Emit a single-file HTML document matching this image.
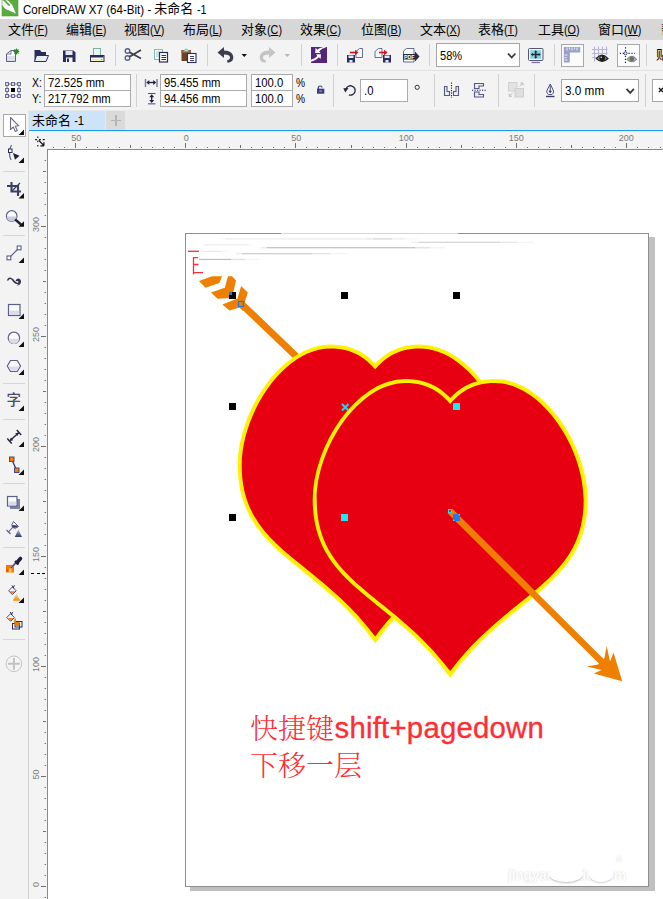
<!DOCTYPE html>
<html lang="zh"><head><meta charset="utf-8"><title>CorelDRAW X7</title>
<style>
html,body{margin:0;padding:0;}
body{width:663px;height:899px;overflow:hidden;position:relative;background:#f3f3f3;font-family:"Liberation Sans","Noto Sans CJK SC",sans-serif;font-size:12px;color:#000;}
.abs{position:absolute;}
.t{position:absolute;white-space:nowrap;line-height:1;}
.sep{position:absolute;width:1px;background:#d4d4d4;}
.inp{position:absolute;background:#fff;border:1px solid #ababab;box-sizing:border-box;}
.inp span{position:absolute;left:3px;top:1px;font-size:12px;line-height:13px;white-space:nowrap;}
u{text-decoration:underline;text-underline-offset:1px;}
svg{position:absolute;overflow:visible;}
.lat{display:inline-block;font-size:12px;transform:scaleX(.9);transform-origin:0 50%;}
.rl{position:absolute;font-size:9px;color:#7a7a7a;line-height:1;white-space:nowrap;}
</style></head><body>

<div class="abs" style="left:0;top:0;width:663px;height:19px;background:#fff;"></div>
<svg style="left:0;top:0" width="20" height="17" viewBox="0 0 20 17"><rect x="2" y="0" width="16" height="16" fill="#5aab42"/><path d="M2 0L7.600 0C9 1.500 10.500 3 11.600 4.300C13.500 7 14.500 10.500 15.900 13.600C12 12 9 10.500 6.600 9.600C4.500 8 3 6.500 2 5Z" fill="#fff"/><path d="M3.600 -.5L9 5.200" stroke="#5aab42" stroke-width="1.700" stroke-linecap="round"/><rect x="2" y="0" width="16" height="16" fill="none" stroke="#4ea236" stroke-width=".6"/></svg>
<div class="t" id="title" style="left:23px;top:2.500px;font-size:12px;"><span class="lat" style="transform:scaleX(.965);margin-right:-5px">CorelDRAW X7 (64-Bit) -&nbsp;</span><span style="font-size:13px;position:relative;top:-1px">未命名</span><span class="lat" style="transform:scaleX(.9);margin-left:1px">&nbsp;-1</span></div>
<div class="abs" style="left:0;top:19px;width:663px;height:21px;background:#d7d7d7;"></div>
<div class="t menu" id="m0" style="left:8px;top:23px;font-size:13px;">文件<span class="lat">(<u>F</u>)</span></div>
<div class="t menu" id="m1" style="left:66px;top:23px;font-size:13px;">编辑<span class="lat">(<u>E</u>)</span></div>
<div class="t menu" id="m2" style="left:124px;top:23px;font-size:13px;">视图<span class="lat">(<u>V</u>)</span></div>
<div class="t menu" id="m3" style="left:183px;top:23px;font-size:13px;">布局<span class="lat">(<u>L</u>)</span></div>
<div class="t menu" id="m4" style="left:241px;top:23px;font-size:13px;">对象<span class="lat">(<u>C</u>)</span></div>
<div class="t menu" id="m5" style="left:300px;top:23px;font-size:13px;">效果<span class="lat">(<u>C</u>)</span></div>
<div class="t menu" id="m6" style="left:361px;top:23px;font-size:13px;">位图<span class="lat">(<u>B</u>)</span></div>
<div class="t menu" id="m7" style="left:420px;top:23px;font-size:13px;">文本<span class="lat">(<u>X</u>)</span></div>
<div class="t menu" id="m8" style="left:478px;top:23px;font-size:13px;">表格<span class="lat">(<u>T</u>)</span></div>
<div class="t menu" id="m9" style="left:538px;top:23px;font-size:13px;">工具<span class="lat">(<u>O</u>)</span></div>
<div class="t menu" id="m10" style="left:598px;top:23px;font-size:13px;">窗口<span class="lat">(<u>W</u>)</span></div>
<div class="t menu" id="m11" style="left:661px;top:23px;font-size:13px;">帮<span class="lat">(<u>H</u>)</span></div>
<div class="abs" style="left:0;top:40px;width:663px;height:70px;background:#f3f3f3;"></div>
<div class="abs" style="left:0;top:70px;width:663px;height:1px;background:#e2e2e2;"></div>
<div class="abs" style="left:0;top:110px;width:663px;height:20px;background:#e9e9e9;"></div>
<div class="abs" style="left:29px;top:111px;width:76px;height:19px;background:#cde4f8;"></div>
<div class="t" id="tab" style="left:32px;top:114px;font-size:13px;">未命名<span class="lat" style="font-size:12.5px;transform:scaleX(.9);margin-left:0px">&nbsp;-1</span></div>
<div class="abs" style="left:106px;top:111px;width:19px;height:19px;background:#dadada;"></div>
<div class="abs" style="left:110.500px;top:119.500px;width:10.500px;height:1.600px;background:#b4b4b4;"></div><div class="abs" style="left:115px;top:115px;width:1.600px;height:10.500px;background:#b4b4b4;"></div>
<div class="abs" style="left:29px;top:129.500px;width:634px;height:1.500px;background:#1a9ff0;"></div>
<div class="abs" style="left:0;top:110px;width:28px;height:789px;background:#f3f3f3;"></div>
<div class="abs" style="left:28px;top:131px;width:1px;height:768px;background:#d2d2d2;"></div>
<div class="abs" style="left:29px;top:131px;width:634px;height:18px;background:#f4f4f4;"></div>
<div class="abs" style="left:29px;top:131px;width:18px;height:768px;background:#f4f4f4;"></div>
<div class="abs" style="left:47px;top:149px;width:616px;height:750px;background:#fff;border-left:1px solid #8a8a8a;border-top:1px solid #8a8a8a;box-sizing:border-box;"></div>
<svg style="left:0;top:0" width="663" height="899" fill="#707070" shape-rendering="crispEdges"><rect x="53.0" y="147" width="1" height="1"/><rect x="64.0" y="147" width="1" height="1"/><rect x="75.0" y="143" width="1" height="5"/><rect x="86.0" y="147" width="1" height="1"/><rect x="97.0" y="147" width="1" height="1"/><rect x="108.0" y="147" width="1" height="1"/><rect x="119.0" y="147" width="1" height="1"/><rect x="130.0" y="145" width="1" height="3"/><rect x="141.0" y="147" width="1" height="1"/><rect x="152.0" y="147" width="1" height="1"/><rect x="163.0" y="147" width="1" height="1"/><rect x="174.0" y="147" width="1" height="1"/><rect x="185.0" y="143" width="1" height="5"/><rect x="196.0" y="147" width="1" height="1"/><rect x="207.0" y="147" width="1" height="1"/><rect x="218.0" y="147" width="1" height="1"/><rect x="229.0" y="147" width="1" height="1"/><rect x="240.0" y="145" width="1" height="3"/><rect x="251.0" y="147" width="1" height="1"/><rect x="262.0" y="147" width="1" height="1"/><rect x="273.0" y="147" width="1" height="1"/><rect x="284.0" y="147" width="1" height="1"/><rect x="295.0" y="143" width="1" height="5"/><rect x="306.0" y="147" width="1" height="1"/><rect x="317.0" y="147" width="1" height="1"/><rect x="328.0" y="147" width="1" height="1"/><rect x="339.0" y="147" width="1" height="1"/><rect x="351.0" y="145" width="1" height="3"/><rect x="362.0" y="147" width="1" height="1"/><rect x="373.0" y="147" width="1" height="1"/><rect x="384.0" y="147" width="1" height="1"/><rect x="395.0" y="147" width="1" height="1"/><rect x="406.0" y="143" width="1" height="5"/><rect x="417.0" y="147" width="1" height="1"/><rect x="428.0" y="147" width="1" height="1"/><rect x="439.0" y="147" width="1" height="1"/><rect x="450.0" y="147" width="1" height="1"/><rect x="461.0" y="145" width="1" height="3"/><rect x="472.0" y="147" width="1" height="1"/><rect x="483.0" y="147" width="1" height="1"/><rect x="494.0" y="147" width="1" height="1"/><rect x="505.0" y="147" width="1" height="1"/><rect x="516.0" y="143" width="1" height="5"/><rect x="527.0" y="147" width="1" height="1"/><rect x="538.0" y="147" width="1" height="1"/><rect x="549.0" y="147" width="1" height="1"/><rect x="560.0" y="147" width="1" height="1"/><rect x="571.0" y="145" width="1" height="3"/><rect x="582.0" y="147" width="1" height="1"/><rect x="593.0" y="147" width="1" height="1"/><rect x="604.0" y="147" width="1" height="1"/><rect x="615.0" y="147" width="1" height="1"/><rect x="626.0" y="143" width="1" height="5"/><rect x="637.0" y="147" width="1" height="1"/><rect x="648.0" y="147" width="1" height="1"/><rect x="660.0" y="147" width="1" height="1"/>
<rect x="45" y="897.0" width="1" height="1"/><rect x="44" y="897.0" width="1" height="1" opacity=".4"/><rect x="41" y="886.0" width="5" height="1"/><rect x="45" y="875.0" width="1" height="1"/><rect x="44" y="875.0" width="1" height="1" opacity=".4"/><rect x="45" y="864.0" width="1" height="1"/><rect x="44" y="864.0" width="1" height="1" opacity=".4"/><rect x="45" y="853.0" width="1" height="1"/><rect x="44" y="853.0" width="1" height="1" opacity=".4"/><rect x="45" y="842.0" width="1" height="1"/><rect x="44" y="842.0" width="1" height="1" opacity=".4"/><rect x="43" y="831.0" width="3" height="1"/><rect x="45" y="820.0" width="1" height="1"/><rect x="44" y="820.0" width="1" height="1" opacity=".4"/><rect x="45" y="809.0" width="1" height="1"/><rect x="44" y="809.0" width="1" height="1" opacity=".4"/><rect x="45" y="798.0" width="1" height="1"/><rect x="44" y="798.0" width="1" height="1" opacity=".4"/><rect x="45" y="787.0" width="1" height="1"/><rect x="44" y="787.0" width="1" height="1" opacity=".4"/><rect x="41" y="776.0" width="5" height="1"/><rect x="45" y="765.0" width="1" height="1"/><rect x="44" y="765.0" width="1" height="1" opacity=".4"/><rect x="45" y="754.0" width="1" height="1"/><rect x="44" y="754.0" width="1" height="1" opacity=".4"/><rect x="45" y="743.0" width="1" height="1"/><rect x="44" y="743.0" width="1" height="1" opacity=".4"/><rect x="45" y="732.0" width="1" height="1"/><rect x="44" y="732.0" width="1" height="1" opacity=".4"/><rect x="43" y="721.0" width="3" height="1"/><rect x="45" y="710.0" width="1" height="1"/><rect x="44" y="710.0" width="1" height="1" opacity=".4"/><rect x="45" y="699.0" width="1" height="1"/><rect x="44" y="699.0" width="1" height="1" opacity=".4"/><rect x="45" y="688.0" width="1" height="1"/><rect x="44" y="688.0" width="1" height="1" opacity=".4"/><rect x="45" y="677.0" width="1" height="1"/><rect x="44" y="677.0" width="1" height="1" opacity=".4"/><rect x="41" y="666.0" width="5" height="1"/><rect x="45" y="655.0" width="1" height="1"/><rect x="44" y="655.0" width="1" height="1" opacity=".4"/><rect x="45" y="644.0" width="1" height="1"/><rect x="44" y="644.0" width="1" height="1" opacity=".4"/><rect x="45" y="633.0" width="1" height="1"/><rect x="44" y="633.0" width="1" height="1" opacity=".4"/><rect x="45" y="622.0" width="1" height="1"/><rect x="44" y="622.0" width="1" height="1" opacity=".4"/><rect x="43" y="611.0" width="3" height="1"/><rect x="45" y="600.0" width="1" height="1"/><rect x="44" y="600.0" width="1" height="1" opacity=".4"/><rect x="45" y="589.0" width="1" height="1"/><rect x="44" y="589.0" width="1" height="1" opacity=".4"/><rect x="45" y="578.0" width="1" height="1"/><rect x="44" y="578.0" width="1" height="1" opacity=".4"/><rect x="45" y="567.0" width="1" height="1"/><rect x="44" y="567.0" width="1" height="1" opacity=".4"/><rect x="41" y="556.0" width="5" height="1"/><rect x="45" y="545.0" width="1" height="1"/><rect x="44" y="545.0" width="1" height="1" opacity=".4"/><rect x="45" y="534.0" width="1" height="1"/><rect x="44" y="534.0" width="1" height="1" opacity=".4"/><rect x="45" y="523.0" width="1" height="1"/><rect x="44" y="523.0" width="1" height="1" opacity=".4"/><rect x="45" y="512.0" width="1" height="1"/><rect x="44" y="512.0" width="1" height="1" opacity=".4"/><rect x="43" y="501.0" width="3" height="1"/><rect x="45" y="490.0" width="1" height="1"/><rect x="44" y="490.0" width="1" height="1" opacity=".4"/><rect x="45" y="479.0" width="1" height="1"/><rect x="44" y="479.0" width="1" height="1" opacity=".4"/><rect x="45" y="468.0" width="1" height="1"/><rect x="44" y="468.0" width="1" height="1" opacity=".4"/><rect x="45" y="457.0" width="1" height="1"/><rect x="44" y="457.0" width="1" height="1" opacity=".4"/><rect x="41" y="446.0" width="5" height="1"/><rect x="45" y="435.0" width="1" height="1"/><rect x="44" y="435.0" width="1" height="1" opacity=".4"/><rect x="45" y="424.0" width="1" height="1"/><rect x="44" y="424.0" width="1" height="1" opacity=".4"/><rect x="45" y="413.0" width="1" height="1"/><rect x="44" y="413.0" width="1" height="1" opacity=".4"/><rect x="45" y="402.0" width="1" height="1"/><rect x="44" y="402.0" width="1" height="1" opacity=".4"/><rect x="43" y="391.0" width="3" height="1"/><rect x="45" y="380.0" width="1" height="1"/><rect x="44" y="380.0" width="1" height="1" opacity=".4"/><rect x="45" y="369.0" width="1" height="1"/><rect x="44" y="369.0" width="1" height="1" opacity=".4"/><rect x="45" y="358.0" width="1" height="1"/><rect x="44" y="358.0" width="1" height="1" opacity=".4"/><rect x="45" y="347.0" width="1" height="1"/><rect x="44" y="347.0" width="1" height="1" opacity=".4"/><rect x="41" y="336.0" width="5" height="1"/><rect x="45" y="325.0" width="1" height="1"/><rect x="44" y="325.0" width="1" height="1" opacity=".4"/><rect x="45" y="314.0" width="1" height="1"/><rect x="44" y="314.0" width="1" height="1" opacity=".4"/><rect x="45" y="303.0" width="1" height="1"/><rect x="44" y="303.0" width="1" height="1" opacity=".4"/><rect x="45" y="292.0" width="1" height="1"/><rect x="44" y="292.0" width="1" height="1" opacity=".4"/><rect x="43" y="281.0" width="3" height="1"/><rect x="45" y="270.0" width="1" height="1"/><rect x="44" y="270.0" width="1" height="1" opacity=".4"/><rect x="45" y="259.0" width="1" height="1"/><rect x="44" y="259.0" width="1" height="1" opacity=".4"/><rect x="45" y="248.0" width="1" height="1"/><rect x="44" y="248.0" width="1" height="1" opacity=".4"/><rect x="45" y="237.0" width="1" height="1"/><rect x="44" y="237.0" width="1" height="1" opacity=".4"/><rect x="41" y="226.0" width="5" height="1"/><rect x="45" y="215.0" width="1" height="1"/><rect x="44" y="215.0" width="1" height="1" opacity=".4"/><rect x="45" y="204.0" width="1" height="1"/><rect x="44" y="204.0" width="1" height="1" opacity=".4"/><rect x="45" y="193.0" width="1" height="1"/><rect x="44" y="193.0" width="1" height="1" opacity=".4"/><rect x="45" y="182.0" width="1" height="1"/><rect x="44" y="182.0" width="1" height="1" opacity=".4"/><rect x="43" y="171.0" width="3" height="1"/><rect x="45" y="160.0" width="1" height="1"/><rect x="44" y="160.0" width="1" height="1" opacity=".4"/></svg>
<div class="rl" style="left:56.2px;top:134px;width:40px;text-align:center;">50</div>
<div class="rl" style="left:166.2px;top:134px;width:40px;text-align:center;">0</div>
<div class="rl" style="left:276.2px;top:134px;width:40px;text-align:center;">50</div>
<div class="rl" style="left:386.2px;top:134px;width:40px;text-align:center;">100</div>
<div class="rl" style="left:496.2px;top:134px;width:40px;text-align:center;">150</div>
<div class="rl" style="left:606.2px;top:134px;width:40px;text-align:center;">200</div>
<div class="rl" style="left:16.4px;top:879.9px;width:40px;text-align:center;transform:rotate(-90deg);">0</div>
<div class="rl" style="left:16.4px;top:769.9px;width:40px;text-align:center;transform:rotate(-90deg);">50</div>
<div class="rl" style="left:16.4px;top:659.9px;width:40px;text-align:center;transform:rotate(-90deg);">100</div>
<div class="rl" style="left:16.4px;top:549.9px;width:40px;text-align:center;transform:rotate(-90deg);">150</div>
<div class="rl" style="left:16.4px;top:439.9px;width:40px;text-align:center;transform:rotate(-90deg);">200</div>
<div class="rl" style="left:16.4px;top:329.9px;width:40px;text-align:center;transform:rotate(-90deg);">250</div>
<div class="rl" style="left:16.4px;top:219.9px;width:40px;text-align:center;transform:rotate(-90deg);">300</div>
<svg style="left:0;top:0" width="60" height="160" viewBox="0 0 60 160" stroke="#111" fill="none" stroke-width="1.100"><path d="M35.200 139.600H45" stroke-dasharray="1.900 1.900"/><path d="M37.800 136.500V147" stroke-dasharray="1.600 2.600"/><path d="M38.800 140.300L43.800 145.500M43.900 145.800V142.300M43.900 145.800H40.400" stroke-width="1.200"/></svg>
<div class="abs" style="left:31px;top:573px;width:16px;height:1px;background:repeating-linear-gradient(90deg,#000 0 3px,transparent 3px 5.500px);"></div>
<svg style="left:0;top:0" width="663" height="899" viewBox="0 0 663 899">
<rect x="115" y="44" width="1" height="22" fill="#d2d2d2"/>
<rect x="207" y="44" width="1" height="22" fill="#d2d2d2"/>
<rect x="301" y="44" width="1" height="22" fill="#d2d2d2"/>
<rect x="337" y="44" width="1" height="22" fill="#d2d2d2"/>
<rect x="429" y="44" width="1" height="22" fill="#d2d2d2"/>
<rect x="554" y="44" width="1" height="22" fill="#d2d2d2"/>
<rect x="646" y="44" width="1" height="22" fill="#d2d2d2"/>
<rect x="136" y="74" width="1" height="33" fill="#d2d2d2"/>
<rect x="333" y="74" width="1" height="33" fill="#d2d2d2"/>
<rect x="434" y="74" width="1" height="33" fill="#d2d2d2"/>
<rect x="498" y="74" width="1" height="33" fill="#d2d2d2"/>
<rect x="534" y="74" width="1" height="33" fill="#d2d2d2"/>
<rect x="645" y="74" width="1" height="33" fill="#d2d2d2"/>
<g><path d="M6.500 61.500V54L11 50.500H15.500V61.500Z" fill="#fafafa" stroke="#5c5f88" stroke-width="1"/><path d="M7 56H15V61H7Z" fill="#dedee6"/><path d="M6.500 54H11V50.500" fill="none" stroke="#5c5f88" stroke-width=".8"/><g transform="translate(16.400 51.300) scale(.82) translate(-16.500 -51.800)"><path d="M16.500 47.800l.9 2 2.100-.8-.8 2.100 2 .9-2 .9.800 2.100-2.100-.8-.9 2-.9-2-2.100.8.800-2.100-2-.9 2-.9-.8-2.100 2.100.8z" fill="#1c8c1c"/></g></g>
<g><path d="M34.500 50H40L41.500 52H46V61.500H34.500Z" fill="#2a2d5c"/><path d="M36.500 55.500H48.500L46 61.500H34.500Z" fill="#ececf4" stroke="#2a2d5c" stroke-width="1"/></g>
<g><path d="M63 50.500H73.500L75.500 52.500V62H63Z" fill="#2a2d5c"/><rect x="65.500" y="51" width="7" height="4" fill="#e8e8f4"/><rect x="66" y="57.500" width="6.500" height="4.500" fill="#f4f4fa"/><rect x="67" y="58.500" width="2" height="3.500" fill="#2a2d5c"/></g>
<g><rect x="93.500" y="48.500" width="7" height="8" fill="#e9f6f4" stroke="#7fb0a8" stroke-width="1"/><rect x="90.500" y="55.500" width="13.500" height="6" fill="#f8f8f8" stroke="#2a2d5c" stroke-width="1"/><rect x="91" y="55" width="12.500" height="2.500" fill="#2a2d5c"/><rect x="91.500" y="59" width="11.500" height="2" fill="#f2eebc"/><rect x="101" y="59" width="1.200" height="1.200" fill="#e0a000"/></g>
<g fill="none"><circle cx="127.500" cy="51" r="2.300" stroke="#5c5f88" stroke-width="1.400"/><circle cx="127.500" cy="58" r="2.300" stroke="#5c5f88" stroke-width="1.400"/><path d="M129.500 52.200L141 58.500M129.500 56.800L141 50" stroke="#3c3c44" stroke-width="1.700"/></g>
<g><rect x="154.500" y="49.500" width="8" height="10" fill="#f2faf9" stroke="#86b8b2" stroke-width="1"/><path d="M156 52H161M156 54H161M156 56H159" stroke="#9cc8c2" stroke-width=".9"/><rect x="159.500" y="52.500" width="8" height="9.500" fill="#fafafc" stroke="#2a2d5c" stroke-width="1.200"/><path d="M161.500 55.500H166M161.500 57.500H166M161.500 59.500H166" stroke="#2a2d5c" stroke-width="1"/></g>
<g><rect x="181.500" y="50" width="9.500" height="11" fill="#6b4426"/><rect x="181.500" y="50" width="9.500" height="3" fill="#8a6240"/><path d="M183.500 51.500Q186.300 46.500 189 51.500Z" fill="#bfe0dc" stroke="#6fa39c" stroke-width=".8"/><rect x="187.500" y="53.500" width="8.500" height="9" fill="#fdfdff" stroke="#2a2d5c" stroke-width="1.100"/><path d="M190 56.500H194M190 58.500H194M190 60.500H194" stroke="#2a2d5c" stroke-width=".9"/></g>
<path d="M217.500 52.500L224 47V50.500C230 50.500 233.300 53.500 233.300 57.500C233.300 60.500 231 62.500 227.500 62.800L227 60.300C229 60 230 59 230 57.500C230 55.500 228 54.500 224 54.500V58Z" fill="#3d3d50"/>
<path d="M241.500 54H247L244.250 57Z" fill="#111"/>
<g transform="translate(493,0) scale(-1,1)"><path d="M217.500 52.500L224 47V50.500C230 50.500 233.300 53.500 233.300 57.500C233.300 60.500 231 62.500 227.500 62.800L227 60.300C229 60 230 59 230 57.500C230 55.500 228 54.500 224 54.500V58Z" fill="#c4c4c4"/></g>
<path d="M284.500 54H290L287.250 57Z" fill="#b8b8b8"/>
<g><rect x="311" y="47" width="16" height="16" fill="#52257a"/><path d="M315.600 47.800L315.200 53H320.600L319.200 51.200Q321.500 48.200 326.500 47.200L323.500 47Q319.500 47.500 317.300 49.800Z" fill="#fff"/><path d="M316 54.300H321L320.600 59L319 57.300Q316 60.800 311 61.800V59.800Q314.800 58.800 317.400 55.900Z" fill="#fff"/></g>
<g><path d="M356 57.500V51.500L359.500 48.500H362.500V57.500Z" fill="#f2f8f8" stroke="#5c5f88" stroke-width=".9"/><rect x="347" y="55" width="8" height="7.500" fill="#2a2d5c"/><rect x="348.500" y="55.500" width="5" height="2.500" fill="#e8e8f4"/><rect x="349.500" y="60" width="3" height="2.500" fill="#e8e8f4"/><path d="M350 52.500H356" stroke="#d8101c" stroke-width="1.600"/><path d="M355 49.800L358.500 52.500L355 55.200Z" fill="#d8101c"/></g>
<g><path d="M375 57.500V51.500L378.500 48.500H382V57.500Z" fill="#f2f8f8" stroke="#5c5f88" stroke-width=".9"/><rect x="383" y="55" width="8" height="7.500" fill="#2a2d5c"/><rect x="384.500" y="55.500" width="5" height="2.500" fill="#e8e8f4"/><rect x="385.500" y="60" width="3" height="2.500" fill="#e8e8f4"/><path d="M379 52.500H385" stroke="#d8101c" stroke-width="1.600"/><path d="M384 49.800L387.500 52.500L384 55.200Z" fill="#d8101c"/></g>
<g><path d="M403.500 62V51L406.500 48.500H414V62Z" fill="#f4faf9" stroke="#5c5f88" stroke-width=".9"/><path d="M403 54H415V51.500L419.500 56.500L415 61.500V59.500H403Z" fill="#2b2b3c"/><text x="404" y="59" font-family="'Liberation Sans',sans-serif" font-size="5.500" font-weight="700" fill="#fff" textLength="10.500" lengthAdjust="spacingAndGlyphs">PDF</text></g>
<rect x="436.500" y="43.500" width="83" height="23" fill="#fff" stroke="#a6a6a6" stroke-width="1"/>
<path d="M508 53.500L511.700 57.500L515.400 53.500" fill="none" stroke="#3a3a3a" stroke-width="1.800"/>
<g><rect x="528.500" y="48.500" width="14.500" height="12" rx="1" fill="#f4f4fa" stroke="#55557a" stroke-width="1"/><rect x="530.300" y="50.300" width="10.900" height="8.400" fill="#86cfdc"/><path d="M535.750 51.500V57.500M532 54.500H539.500" stroke="#1e2440" stroke-width="1.300"/><path d="M535.750 50.300L537.400 52.200H534.100ZM535.750 58.700L537.400 56.800H534.100ZM530.800 54.500L532.700 52.900V56.100ZM540.700 54.500L538.800 52.900V56.100Z" fill="#1e2440"/><path d="M531.500 62.500H540" stroke="#7a6aa8" stroke-width="1.200"/></g>
<rect x="561.500" y="44.500" width="22" height="22" fill="#fbfbfb" stroke="#a8a8a8" stroke-width="1"/>
<path d="M564.500 47H579.500Q580.200 47 580.200 47.700V51.800Q580.200 52.500 579.500 52.500H569.800V61.800Q569.800 62.500 569.100 62.500H564.500Q563.800 62.500 563.800 61.800V47.700Q563.800 47 564.500 47Z" fill="#98a2c4"/><path d="M567 47.500V50.500M569.500 47.500V49.500M572 47.500V50.500M574.500 47.500V49.500M577 47.500V50.500M564.500 55H567.500M564.500 57.500H566.500M564.500 60H567.500" stroke="#e6e9f6" stroke-width="1.100"/>
<g stroke="#b8b2da" stroke-width="1.100"><path d="M592 49.500H607.500M592 53.500H607.500M592 57.500H598M594.500 46.500V61.500M598.500 46.500V56M602.500 46.500V54M606.500 46.500V55"/></g>
<g><path d="M596.300 58.600Q602 51.800 608 58.600Q602 64.200 596.300 58.600Z" fill="#9c9c9c" stroke="#1c1c1c" stroke-width="1.300"/><circle cx="602.200" cy="58.200" r="2.900" fill="#1c1c1c"/><circle cx="601.200" cy="57.200" r=".8" fill="#e8e8e8"/></g>
<rect x="617.500" y="44.500" width="22" height="22" fill="#fbfbfb" stroke="#a8a8a8" stroke-width="1"/>
<path d="M625.500 47.200V63.500" stroke="#1c2050" stroke-width="1.200" stroke-dasharray="1.200 1.700"/><path d="M619.800 53.400H635" stroke="#1c2050" stroke-width="1.200" stroke-dasharray="1.200 1.700"/><circle cx="625.500" cy="53.400" r="1.500" fill="#fbfbfb" stroke="#1c2050" stroke-width=".8"/>
<g><path d="M627 59.300Q631.800 53.500 636.500 59.300Q631.800 64 627 59.300Z" fill="#c4c4c4" stroke="#8c8c8c" stroke-width="1.100"/><circle cx="631.800" cy="59" r="2.400" fill="#6e6e6e"/></g>
<rect x="4" y="81" width="18" height="18" fill="#fafafa" opacity=".7"/>
<path d="M9 84H11M15 84H17M9 96H11M15 96H17M7 86V88M7 92V94M19 86V88M19 92V94" stroke="#6a6c92" stroke-width="1"/>
<rect x="5.5" y="82.5" width="3" height="3" fill="#dcdce6" stroke="#6a6c92" stroke-width="1"/>
<rect x="5.5" y="88.5" width="3" height="3" fill="#dcdce6" stroke="#6a6c92" stroke-width="1"/>
<rect x="5.5" y="94.5" width="3" height="3" fill="#dcdce6" stroke="#6a6c92" stroke-width="1"/>
<rect x="11.5" y="82.5" width="3" height="3" fill="#dcdce6" stroke="#6a6c92" stroke-width="1"/>
<rect x="11" y="88" width="4" height="4" fill="#000"/>
<rect x="11.5" y="94.5" width="3" height="3" fill="#dcdce6" stroke="#6a6c92" stroke-width="1"/>
<rect x="17.5" y="82.5" width="3" height="3" fill="#dcdce6" stroke="#6a6c92" stroke-width="1"/>
<rect x="17.5" y="88.5" width="3" height="3" fill="#dcdce6" stroke="#6a6c92" stroke-width="1"/>
<rect x="17.5" y="94.5" width="3" height="3" fill="#dcdce6" stroke="#6a6c92" stroke-width="1"/>
<g stroke="#22223a" fill="#22223a"><path d="M145.500 79V87M157 79V87" stroke="#7672b0" stroke-width="1.400" fill="none"/><path d="M148 82.500H154.500" stroke-width="1.300"/><path d="M146.300 82.500L149.300 80V85ZM156.200 82.500L153.200 80V85Z" stroke="none"/></g>
<g stroke="#22223a" fill="#22223a"><path d="M148 93.500H155.500" stroke="#555" stroke-width="1" fill="none"/><path d="M148 103.800H155.500" stroke="#7672b0" stroke-width="1.400" fill="none"/><path d="M151.700 96V101.500" stroke-width="1.300"/><path d="M151.700 94.300L154.200 97.300H149.200ZM151.700 103L154.200 100H149.200Z" stroke="none"/></g>
<g><path d="M318.300 89V87.800Q318.300 86 320.200 86Q321.900 86 322.100 87.500" fill="none" stroke="#3c3a78" stroke-width="1.200"/><rect x="317" y="88.700" width="7.300" height="5" fill="#3c3a78"/><rect x="319.300" y="90.600" width="2.600" height=".9" fill="#c8c4e4"/></g>
<g><path d="M348.900 94.900A4.700 4.700 0 1 0 346 89" fill="none" stroke="#26263e" stroke-width="1.300"/><path d="M343.300 88.300L348.500 88.100L345.300 92.600Z" fill="#26263e"/></g>
<circle cx="417.200" cy="87.300" r="2.100" fill="none" stroke="#333" stroke-width="1"/>
<g fill="#ececf6" stroke="#55587f" stroke-width="1.100"><path d="M444.500 86.500H447V91.500H449.500V95.500H444.500Z"/><path d="M458.500 86.500H456V91.500H453.500V95.500H458.500Z"/><path d="M451.500 82.500V98" fill="none" stroke="#1c2050" stroke-width="1.100" stroke-dasharray="1.200 1.300"/></g>
<g fill="#ececf6" stroke="#55587f" stroke-width="1.100"><path d="M474.500 83.500H483.500V86H479V88.500H474.500Z"/><path d="M474.500 97H483.500V94.500H479V92H474.500Z"/><path d="M472 90.250H487" fill="none" stroke="#1c2050" stroke-width="1.100" stroke-dasharray="1.200 1.300"/></g>
<g><rect x="508.500" y="82.500" width="8.500" height="8.500" fill="#e2e2e2" stroke="#d2d2d2" stroke-width="1"/><rect x="515" y="88.500" width="8.500" height="8.500" fill="#dedede" stroke="#cecece" stroke-width="1"/><path d="M519.500 86.300L523 83M523 83H520.300M523 83V85.700M512.700 93L509.200 96.300M509.200 96.300H511.900M509.200 96.300V93.600" stroke="#bdbdbd" stroke-width="1" fill="none"/></g>
<g fill="none" stroke="#3a3c6e" stroke-width=".9"><path d="M550.250 84L553.600 91Q553.800 93.500 552 94.500H548.500Q546.700 93.500 546.700 91Z" fill="#f4f4fa"/><path d="M550.250 85.500V90.500"/><circle cx="550.250" cy="91.500" r=".9" fill="#2a2d5c"/><path d="M546 96.500H554.500" stroke-width="1.400"/></g>
<rect x="561.500" y="79.500" width="77" height="22" fill="#fff" stroke="#a6a6a6" stroke-width="1"/>
<path d="M626.500 88.800L630.200 92.800L633.900 88.800" fill="none" stroke="#3a3a3a" stroke-width="1.800"/>
<rect x="652.500" y="79.500" width="20" height="22" fill="#fff" stroke="#a6a6a6" stroke-width="1"/>
<path d="M659 88L663 92M663 88L659 92" stroke="#222" stroke-width="1.500"/>
<rect x="3" y="171.0" width="22" height="1" fill="#d6d6d6"/>
<rect x="3" y="235.0" width="22" height="1" fill="#d6d6d6"/>
<rect x="3" y="383.0" width="22" height="1" fill="#d6d6d6"/>
<rect x="3" y="419.0" width="22" height="1" fill="#d6d6d6"/>
<rect x="3" y="483.0" width="22" height="1" fill="#d6d6d6"/>
<rect x="3" y="547.0" width="22" height="1" fill="#d6d6d6"/>
<rect x="3" y="639.0" width="22" height="1" fill="#d6d6d6"/>
<rect x="3.500" y="114.500" width="22" height="22" fill="#fff" stroke="#a8a8a8" stroke-width="1"/>
<path d="M10.500 117.500V129.500L13.300 127L15.300 131.500L17.300 130.600L15.300 126.200L18.800 125.800Z" fill="#fdfdfd" stroke="#6c6e86" stroke-width="1.100" stroke-linejoin="round"/>
<path d="M24 135H18.5L24 129.5Z" fill="#111"/>
<path d="M11.500 145Q7.500 152 11 160" fill="none" stroke="#5c5f88" stroke-width="1.200"/><rect x="8.500" y="149" width="3.500" height="3.500" fill="#fff" stroke="#2a2d5c" stroke-width="1"/><path d="M13 153L19.500 155.800L15 159.800Z" fill="#22223a"/>
<path d="M24 163H18.5L24 157.5Z" fill="#111"/>
<g stroke="#3c3e62" stroke-width="2.100" fill="none"><path d="M7 186H18V196M11.500 182V191.500H21"/><path d="M11.500 191.500L20 183" stroke-width="1.200"/></g>
<path d="M24 198.5H18.5L24 193.0Z" fill="#111"/>
<g><circle cx="11.700" cy="216" r="5.300" fill="#fbfbfd" stroke="#5c5f88" stroke-width="1.200"/><path d="M6.800 216.500A4.900 4.900 0 0 0 16.600 216.500Z" fill="#c9cbdf"/><path d="M15.800 220L21 224.500" stroke="#22223a" stroke-width="2.400" stroke-linecap="round"/></g>
<path d="M24 226.8H18.5L24 221.3Z" fill="#111"/>
<g stroke="#5c5f88" stroke-width="1.100"><path d="M9 258L19 248" fill="none"/><rect x="7" y="256" width="3.800" height="3.800" fill="#fff"/><rect x="17.200" y="246" width="3.800" height="3.800" fill="#fff"/></g>
<path d="M24 263H18.5L24 257.5Z" fill="#111"/>
<path d="M7.500 280.500Q9.500 276.500 12.500 279.500Q15 283.500 18 283.500Q20 283 19.300 281" fill="none" stroke="#34344e" stroke-width="1.500"/><path d="M15.500 281.500Q16 278.500 18.500 278.500Q21.300 279 21 282Q20.500 285.500 16.500 285.500Q19.500 284 18.800 282Q17.500 280.500 15.500 281.500Z" fill="#34344e"/>
<rect x="8.500" y="304.500" width="11.500" height="11" fill="#fbfbfd" stroke="#5c5f88" stroke-width="1.200"/><rect x="9.200" y="310.500" width="10.100" height="4.400" fill="#dcdce9"/>
<path d="M24 319H18.5L24 313.5Z" fill="#111"/>
<circle cx="13.900" cy="337.800" r="5.700" fill="#fbfbfd" stroke="#5c5f88" stroke-width="1.200"/><path d="M8.800 338.800A5.100 5.100 0 0 0 19 338.800Z" fill="#dcdce9"/>
<path d="M24 347H18.5L24 341.5Z" fill="#111"/>
<path d="M7.300 366L10.500 360.500H17.300L20.500 366L17.300 371.500H10.500Z" fill="#fbfbfd" stroke="#5c5f88" stroke-width="1.200"/><path d="M8.300 366.500H19.500L16.900 370.800H10.900Z" fill="#dcdce9"/>
<path d="M24 375H18.5L24 369.5Z" fill="#111"/>
<path d="M24 411H18.5L24 405.5Z" fill="#111"/>
<g stroke="#2a2a44" fill="none"><path d="M9.500 441L19 432.500" stroke-width="1.500"/><path d="M7.300 438.500L11.700 443.500M16.800 430L21.200 435" stroke-width="1.500"/><path d="M9.500 441L13.300 440.200L11 437.500ZM19 432.500L15.200 433.300L17.500 436Z" fill="#2a2a44" stroke="none"/></g>
<path d="M24 447H18.5L24 441.5Z" fill="#111"/>
<g><path d="M12 460L16.500 470" stroke="#2a2d5c" stroke-width="1.200"/><rect x="9.500" y="457" width="4.500" height="4.500" fill="#f08000" stroke="#4a4a78" stroke-width="1"/><rect x="14.500" y="468" width="4.500" height="4.500" fill="#f08000" stroke="#4a4a78" stroke-width="1"/></g>
<path d="M24 475H18.5L24 469.5Z" fill="#111"/>
<rect x="10" y="499" width="10" height="10" fill="#6a6e94" opacity=".85"/><rect x="7.500" y="496.500" width="9.500" height="9.500" fill="#fbfbfd" stroke="#5c5f88" stroke-width="1.200"/><rect x="8.200" y="501.500" width="8.100" height="4" fill="#dcdce9"/>
<path d="M24 511H18.5L24 505.5Z" fill="#111"/>
<defs><linearGradient id="tg" x1="0" y1="0" x2="0" y2="1"><stop offset="0" stop-color="#b8bcd8"/><stop offset="1" stop-color="#34386a"/></linearGradient><linearGradient id="og" x1="0" y1="0" x2="0" y2="1"><stop offset="0" stop-color="#fbe3a8"/><stop offset="1" stop-color="#ee8a00"/></linearGradient></defs>
<g><path d="M13.500 521.500L18.500 526.500Q15.500 529.500 12.500 527.500Q10.500 525 13.500 521.500Z" fill="#f4f4fa" stroke="#5c5f88" stroke-width="1"/><path d="M12 526.500Q14.500 529 18 526.500L17 525.500L12.500 525Z" fill="#3a3e6a"/><path d="M12.500 527.500L8.500 532M6.500 530L10.500 534" stroke="#5c5f88" stroke-width="1.100" fill="none"/><path d="M18.300 529.500L22 537H14.800Z" fill="url(#tg)"/></g>
<g><rect x="6" y="565" width="8" height="7.500" fill="#ee7a00"/><rect x="9" y="568.500" width="2.500" height="4" fill="#f9c080"/><rect x="6" y="569.500" width="2" height="2" fill="#d05a00"/><path d="M11 568L16.500 562" stroke="#8a8a9a" stroke-width="2.200"/><path d="M11 568L16.500 562" stroke="#30304a" stroke-width=".8"/><path d="M15 561L18.500 564.500" stroke="#20203a" stroke-width="2.200"/><path d="M17 562.500L20.500 558.500" stroke="#20203a" stroke-width="3.600" stroke-linecap="round"/></g>
<path d="M24 575H18.5L24 569.5Z" fill="#111"/>
<g><path d="M12.4 587.0L16.2 590.8L12.4 594.5999999999999L8.600000000000001 590.8Z" fill="#f4f4fa" stroke="#4a4c7a" stroke-width="1"/><path d="M9.8 591.1999999999999H15.2L12.4 593.8Z" fill="#ee7a00"/><path d="M11.9 585.3L13.9 588.3M14.4 585.3L13.200000000000001 587.8" stroke="#2a2d5c" stroke-width="1" fill="none"/></g>
<path d="M16.500 593.500L20.300 600.800H12.800Z" fill="url(#og)"/>
<path d="M24 603H18.5L24 597.5Z" fill="#111"/>
<g><path d="M10.6 613.7L14.399999999999999 617.5L10.6 621.3L6.8 617.5Z" fill="#f4f4fa" stroke="#4a4c7a" stroke-width="1"/><path d="M8.0 617.9H13.399999999999999L10.6 620.5Z" fill="#ee7a00"/><path d="M10.1 612.0L12.1 615.0M12.6 612.0L11.4 614.5" stroke="#2a2d5c" stroke-width="1" fill="none"/></g>
<g><rect x="12.500" y="623.500" width="7" height="5.500" fill="#f8f8fc" stroke="#2a2d5c" stroke-width="1"/><rect x="15" y="621.500" width="7" height="5.500" fill="none" stroke="#2a2d5c" stroke-width="1"/><path d="M14.500 618.500H16V622H19.500V626H14.500Z" fill="#ee7a00"/></g>
<circle cx="13.900" cy="663.800" r="7.800" fill="#f4f4f4" stroke="#c4c4c4" stroke-width="1"/><path d="M8 663.800H19.800M13.900 657.900V669.700" stroke="#c2c2c2" stroke-width="2"/>
</svg>
<div class="inp" style="left:44px;top:74px;width:87px;height:17px;"><span id="i1" style="left:3px;top:2px;transform:scaleX(.94);transform-origin:0 50%;">72.525 mm</span></div>
<div class="inp" style="left:44px;top:90px;width:87px;height:17px;"><span id="i2" style="left:3px;top:2px;transform:scaleX(.94);transform-origin:0 50%;">217.792 mm</span></div>
<div class="inp" style="left:160px;top:74px;width:87px;height:17px;"><span id="i3" style="left:3px;top:2px;transform:scaleX(.94);transform-origin:0 50%;">95.455 mm</span></div>
<div class="inp" style="left:160px;top:90px;width:87px;height:17px;"><span id="i4" style="left:3px;top:2px;transform:scaleX(.94);transform-origin:0 50%;">94.456 mm</span></div>
<div class="inp" style="left:251px;top:74px;width:42px;height:17px;"><span id="i5" style="left:3px;top:2px;transform:scaleX(.94);transform-origin:0 50%;">100.0</span></div>
<div class="inp" style="left:251px;top:90px;width:42px;height:17px;"><span id="i6" style="left:3px;top:2px;transform:scaleX(.94);transform-origin:0 50%;">100.0</span></div>
<div class="inp" style="left:360px;top:79px;width:48px;height:23px;"><span id="i7" style="left:3px;top:5px;transform:scaleX(.94);transform-origin:0 50%;">.0</span></div>
<div class="t" id="lx" style="left:32px;top:77px;font-size:12px;transform:scaleX(.87);transform-origin:0 50%;">X:</div><div class="t" id="ly" style="left:32px;top:93px;font-size:12px;transform:scaleX(.87);transform-origin:0 50%;">Y:</div>
<div class="t" id="p1" style="left:296px;top:77px;font-size:12px;transform:scaleX(.85);transform-origin:0 50%;">%</div><div class="t" id="p2" style="left:296px;top:93px;font-size:12px;transform:scaleX(.85);transform-origin:0 50%;">%</div>
<div class="t" id="z58" style="left:440px;top:49.500px;font-size:12px;transform:scaleX(.92);transform-origin:0 50%;">58%</div>
<div class="t" id="mm3" style="left:565px;top:85px;font-size:12px;transform:scaleX(.98);transform-origin:0 50%;">3.0 mm</div>
<div class="t" id="tie" style="left:656px;top:48px;font-size:13px;">贴齐</div>
<div class="t" id="zi" style="left:6.500px;top:392px;font-size:14.500px;color:#4c4c66;font-weight:500;font-family:'Noto Sans CJK SC',sans-serif;">字</div>
<svg style="left:0;top:0" width="663" height="899" viewBox="0 0 663 899">
<rect x="649" y="237" width="6" height="654" fill="#c0c0c0"/><rect x="190" y="887" width="465" height="4" fill="#c0c0c0"/>
<rect x="185.5" y="233.5" width="463" height="653" fill="#fff" stroke="#8e8e8e" stroke-width="1"/>
<path d="M281 233.500H458" stroke="#fff" stroke-width="1.200"/><path d="M281 233.500H458" stroke="#d6d6d6" stroke-width="1"/>
<g stroke-width="1.100" fill="none"><path d="M220 238.9H225" stroke="#ececec" stroke-opacity=".35"/><path d="M225 238.9H372" stroke="#ececec"/><path d="M372 238.9H372.0" stroke="#ececec" stroke-opacity=".5"/><path d="M372.0 238.9H372" stroke="#ececec" stroke-opacity=".2"/><path d="M367 238.9H373" stroke="#cecece" stroke-opacity=".35"/><path d="M373 238.9H392" stroke="#cecece"/><path d="M392 238.9H404.5" stroke="#cecece" stroke-opacity=".5"/><path d="M404.5 238.9H417" stroke="#cecece" stroke-opacity=".2"/><path d="M411 242.3H419" stroke="#cacaca" stroke-opacity=".35"/><path d="M419 242.3H500" stroke="#cacaca"/><path d="M500 242.3H517.0" stroke="#cacaca" stroke-opacity=".5"/><path d="M517.0 242.3H534" stroke="#cacaca" stroke-opacity=".2"/><path d="M202 244.9H205" stroke="#ebebeb" stroke-opacity=".35"/><path d="M205 244.9H248" stroke="#ebebeb"/><path d="M248 244.9H251.0" stroke="#ebebeb" stroke-opacity=".5"/><path d="M251.0 244.9H254" stroke="#ebebeb" stroke-opacity=".2"/><path d="M261 247.8H267" stroke="#b4b4b4" stroke-opacity=".35"/><path d="M267 247.8H415" stroke="#b4b4b4"/><path d="M415 247.8H430.0" stroke="#b4b4b4" stroke-opacity=".5"/><path d="M430.0 247.8H445" stroke="#b4b4b4" stroke-opacity=".2"/><path d="M201 251.3H203" stroke="#e6e6e6" stroke-opacity=".35"/><path d="M203 251.3H221" stroke="#e6e6e6"/><path d="M221 251.3H225.0" stroke="#e6e6e6" stroke-opacity=".5"/><path d="M225.0 251.3H229" stroke="#e6e6e6" stroke-opacity=".2"/><path d="M236 253.7H242" stroke="#c0c0c0" stroke-opacity=".35"/><path d="M242 253.7H312" stroke="#c0c0c0"/><path d="M312 253.7H330.0" stroke="#c0c0c0" stroke-opacity=".5"/><path d="M330.0 253.7H348" stroke="#c0c0c0" stroke-opacity=".2"/><path d="M199 259.4H199" stroke="#bcbcbc" stroke-opacity=".35"/><path d="M199 259.4H231" stroke="#bcbcbc"/><path d="M231 259.4H245.0" stroke="#bcbcbc" stroke-opacity=".5"/><path d="M245.0 259.4H259" stroke="#bcbcbc" stroke-opacity=".2"/></g>
<g stroke="#ff2a3a" stroke-width="1.3" fill="none"><path d="M188 251.3H199"/><path d="M193.5 257V274.5M193.5 257.6H198M193.5 264.5H198.5M193.5 272.7H203"/></g>
<path d="M241 303.500L300 360" stroke="#ee7f00" stroke-width="7" fill="none"/>
<g fill="#ee7f00"><path d="M199 281L212 276.300L222 276.300L219.400 283L205.500 287.700Z"/><path d="M228 276.300L232 276.300L236 280.500L232.500 296L231 298L217.600 298.800L211 292.500L224.800 287.700Z"/><path d="M241.100 285.900L247.800 292.500L244.500 303L248 306.500L243 311L239.500 307.500L229.500 310.600L222.400 304.600L237.500 298.600Z"/></g>
<path d="M375.2 369.5 C384.2 359.1 396.4 348.5 419.9 348.5 C466.8 348.5 508.7 413.6 508.7 465.2 C508.7 549.1 434.4 557.2 375.2 636.5 C316.0 557.2 241.7 549.1 241.7 465.2 C241.7 413.6 283.6 348.5 330.5 348.5 C353.9 348.5 366.2 359.1 375.2 369.5 Z" fill="#e60012" stroke="#fff100" stroke-width="8" stroke-linejoin="miter" paint-order="stroke fill"/>
<path d="M450.2 404.0 C459.2 393.6 471.4 383.0 494.9 383.0 C541.8 383.0 583.7 448.1 583.7 499.7 C583.7 583.6 509.4 591.7 450.2 671.0 C391.0 591.7 316.7 583.6 316.7 499.7 C316.7 448.1 358.6 383.0 405.5 383.0 C428.9 383.0 441.2 393.6 450.2 404.0 Z" fill="#e60012" stroke="#fff100" stroke-width="8" stroke-linejoin="miter" paint-order="stroke fill"/>
<path d="M449.800 510.800L606 666" stroke="#ee7f00" stroke-width="6.600" fill="none"/>
<path d="M622.200 681.200L613.500 652.400L610 661.600L606.700 646.100L604.400 658L598 664.400L586.800 666.500L601.600 670L593.800 673.500Z" fill="#ee7f00"/>
<rect x="229" y="292" width="7" height="7" fill="#000"/>
<rect x="341" y="292" width="7" height="7" fill="#000"/>
<rect x="453" y="292" width="7" height="7" fill="#000"/>
<rect x="229" y="403" width="7" height="7" fill="#000"/>
<rect x="229" y="514" width="7" height="7" fill="#000"/>
<rect x="229" y="292" width="3" height="3" fill="#1e7be6"/>
<rect x="453" y="403" width="7" height="7" fill="#1fe9f0"/>
<rect x="341" y="514" width="7" height="7" fill="#1fe9f0"/>
<path d="M342 404L348.500 410.500M348.500 404L342 410.500" stroke="#1fd6ee" stroke-width="2" fill="none"/>
<rect x="238.500" y="301.500" width="5" height="5" fill="none" stroke="#1e7be6" stroke-width="1.200"/>
<rect x="448.500" y="509.500" width="3" height="3" fill="#c83040" stroke="#1fe0f0" stroke-width="1"/><rect x="453" y="514" width="7" height="7" fill="#1e7bf0"/><path d="M458 514H460V516ZM453 519V521H455Z" fill="#1fe0f0"/>
</svg>
<div class="t" id="rt1" style="left:250px;top:714px;font-size:28px;color:#ff2d35;font-family:'Liberation Sans','Noto Serif CJK SC',serif;line-height:32px;font-weight:300">快捷键</div>
<div class="t" id="lat1" style="left:334.500px;top:710.400px;font-size:29.300px;letter-spacing:.25px;color:#ff2d35;font-family:'Liberation Sans','Noto Serif CJK SC',serif;line-height:36px;-webkit-text-stroke:.35px #ff2d35;">shift+pagedown</div>
<div class="t" id="rt2" style="left:250px;top:751px;font-size:28px;color:#ff2d35;font-family:'Liberation Sans','Noto Serif CJK SC',serif;line-height:32px;font-weight:300">下移一层</div>
<div class="t" id="wm" style="left:508px;top:869px;font-size:13.800px;font-weight:700;color:#fff;text-shadow:0 0 1.500px rgba(0,0,0,.22);letter-spacing:-.2px;">jingyan.baidu.com</div>
<div class="abs" style="left:549px;top:866px;width:34px;height:16px;border-radius:50%;background:#fff;box-shadow:0 2px 2px -1px rgba(0,0,0,.25);"></div>
<div class="abs" style="left:589px;top:866px;width:24px;height:16px;border-radius:50%;background:#fff;box-shadow:0 2px 2px -1px rgba(0,0,0,.2);"></div>
<div class="t" style="left:616px;top:853px;font-size:11px;font-weight:700;color:#fff;text-shadow:0 0 1.500px rgba(0,0,0,.2);">s</div>
</body></html>
